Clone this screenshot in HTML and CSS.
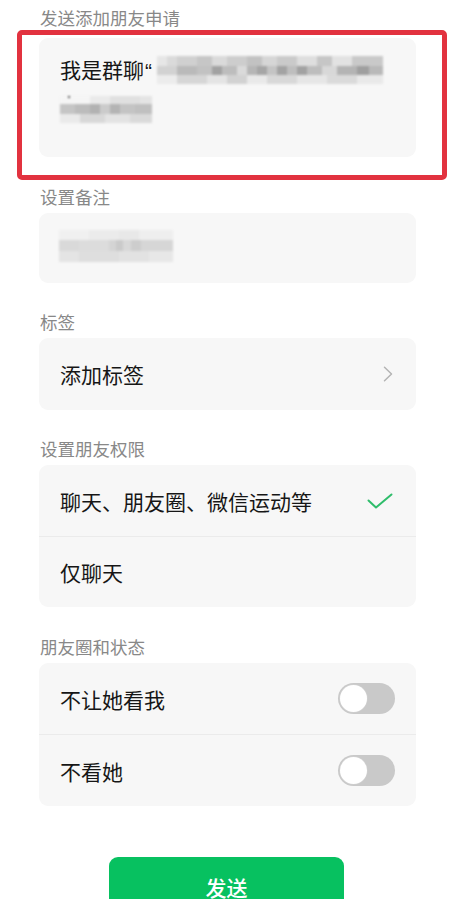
FILE: index.html
```html
<!DOCTYPE html>
<html lang="zh-CN">
<head>
<meta charset="utf-8">
<title>申请添加朋友</title>
<link rel="stylesheet" href="styles.css">
</head>
<body>
<main class="page">
  <section class="section first">
    <div class="label">发送添加朋友申请</div>
    <div class="card message">
      <div class="msg-line"><span class="msg-text">我是群聊<span class="quote">“</span></span><span class="mosaic mosaic-a"></span></div>
      <div class="msg-line"><span class="mosaic mosaic-b"><span class="dot"></span></span></div>
      <div class="highlight"></div>
    </div>
  </section>

  <section class="section">
    <div class="label">设置备注</div>
    <div class="card remark">
      <span class="mosaic mosaic-c"></span>
    </div>
  </section>

  <section class="section mid">
    <div class="label">标签</div>
    <div class="card">
      <div class="row tall">
        <span class="row-text">添加标签</span>
        <svg class="chevron" width="10" height="16" viewBox="0 0 10 16"><path d="M1.5 1.2 L8.5 8 L1.5 14.8" fill="none" stroke="#b4b4b4" stroke-width="1.5" stroke-linecap="round" stroke-linejoin="round"/></svg>
      </div>
    </div>
  </section>

  <section class="section mid">
    <div class="label">设置朋友权限</div>
    <div class="card">
      <div class="row divided">
        <span class="row-text">聊天、朋友圈、微信运动等</span>
        <svg class="check" width="26" height="16" viewBox="0 0 26 16"><path d="M1.5 7.5 L9 14.5 L24.5 1.5" fill="none" stroke="#2fbd6b" stroke-width="2" stroke-linecap="round" stroke-linejoin="round"/></svg>
      </div>
      <div class="row short">
        <span class="row-text">仅聊天</span>
      </div>
    </div>
  </section>

  <section class="section">
    <div class="label">朋友圈和状态</div>
    <div class="card">
      <div class="row divided">
        <span class="row-text">不让她看我</span>
        <span class="toggle"><span class="knob"></span></span>
      </div>
      <div class="row">
        <span class="row-text">不看她</span>
        <span class="toggle"><span class="knob"></span></span>
      </div>
    </div>
  </section>

  <div class="actions">
    <button class="send">发送</button>
  </div>
</main>
</body>
</html>
```

FILE: styles.css
```css
html, body {
  margin: 0;
  padding: 0;
  background: #ffffff;
}

body {
  font-family: "Noto Sans CJK SC", "Noto Sans", sans-serif;
  color: #161616;
  overflow: hidden;
}

.page {
  padding: 6px 37px 0 39px;
}

.section {
  margin-top: 28px;
}

.section.first {
  margin-top: 0;
}

.section.mid {
  margin-top: 27px;
}

.label {
  font-size: 17.5px;
  line-height: 24px;
  color: #888888;
  padding-left: 1px;
}

.card {
  margin-top: 4px;
  background: #f7f7f7;
  border-radius: 9px;
}

.section.first .card {
  margin-top: 8px;
}

.message {
  position: relative;
  padding: 14px 21px 33px;
  height: 72px;
}

.msg-line {
  display: flex;
  align-items: center;
  height: 36px;
}

.msg-text {
  font-size: 21px;
  line-height: 36px;
  white-space: nowrap;
}

.quote {
  font-family: "Liberation Sans", sans-serif;
  margin-left: 1px;
}

.highlight {
  position: absolute;
  left: -22px;
  top: -8px;
  right: -31px;
  bottom: -23px;
  border: 5px solid #e2323f;
  border-radius: 5px;
  pointer-events: none;
}

.mosaic {
  display: block;
  filter: blur(1px);
}

.mosaic-a {
  width: 226px;
  height: 28px;
  margin-left: 5px;
  background:
    linear-gradient(to right, #e6e6e6 0 10px, #dadada 10px 20px, #d0d0d0 20px 40px, #c6c6c6 40px 55px, #dadada 55px 70px, #cdcdcd 70px 90px, #c2c2c2 90px 105px, #d6d6d6 105px 120px, #cacaca 120px 140px, #dedede 140px 160px, #c6c6c6 160px 175px, #e2e2e2 175px 195px, #c9c9c9 195px 226px) 0 0 / 100% 10px no-repeat,
    linear-gradient(to right, #d2d2d2 0 20px, #bababa 20px 40px, #c2c2c2 40px 55px, #a2a2a2 55px 65px, #bdbdbd 65px 80px, #dadada 80px 90px, #b6b6b6 90px 100px, #a6a6a6 100px 110px, #c4c4c4 110px 120px, #a3a3a3 120px 130px, #bebebe 130px 140px, #a2a2a2 140px 150px, #bdbdbd 150px 165px, #d8d8d8 165px 180px, #b4b4b4 180px 200px, #9f9f9f 200px 212px, #b9b9b9 212px 226px) 0 10px / 100% 9px no-repeat,
    linear-gradient(to right, #ececec 0 20px, #d6d6d6 20px 50px, #e4e4e4 50px 70px, #d2d2d2 70px 90px, #e9e9e9 90px 110px, #d8d8d8 110px 140px, #e6e6e6 140px 170px, #dadada 170px 200px, #e9e9e9 200px 226px) 0 19px / 100% 9px no-repeat;
}

.mosaic-b {
  position: relative;
  width: 92px;
  height: 27px;
  margin-top: 6px;
  background:
    linear-gradient(to right, #f5f5f5 0 30px, #eaeaea 30px 50px, #e0e0e0 50px 80px, #e4e4e4 80px 92px) 0 0 / 100% 8px no-repeat,
    linear-gradient(to right, #c5c5c5 0 15px, #bcbcbc 15px 30px, #b2b2b2 30px 40px, #cbcbcb 40px 50px, #b4b4b4 50px 60px, #c4c4c4 60px 75px, #c0c0c0 75px 92px) 0 8px / 100% 10px no-repeat,
    linear-gradient(to right, #eaeaea 0 20px, #d8d8d8 20px 45px, #e3e3e3 45px 70px, #dadada 70px 92px) 0 18px / 100% 9px no-repeat;
}

.dot {
  position: absolute;
  left: 8px;
  top: 0;
  width: 2px;
  height: 2px;
  background: #555555;
}

.remark {
  height: 70px;
  display: flex;
  align-items: center;
  padding-left: 20px;
}

.mosaic-c {
  width: 114px;
  height: 32px;
  margin-top: -4px;
  background:
    linear-gradient(to right, #f0f0f0 0 30px, #ebebeb 30px 60px, #e8e8e8 60px 80px, #eeeeee 80px 114px) 0 0 / 100% 10px no-repeat,
    linear-gradient(to right, #d9d9d9 0 20px, #dcdcdc 20px 50px, #d4d4d4 50px 57px, #cacaca 57px 64px, #d8d8d8 64px 72px, #cdcdcd 72px 82px, #d6d6d6 82px 114px) 0 10px / 100% 11px no-repeat,
    linear-gradient(to right, #e4e4e4 0 20px, #dedede 20px 60px, #e2e2e2 60px 90px, #e7e7e7 90px 114px) 0 21px / 100% 11px no-repeat;
}

.row {
  height: 71px;
  display: flex;
  align-items: center;
  justify-content: space-between;
  padding: 0 21px;
}

.row.tall {
  height: 72px;
  padding-right: 23px;
}

.row.short {
  height: 70px;
}

.row.divided {
  border-bottom: 1px solid #ebebeb;
}

.row-text {
  font-size: 21px;
  line-height: 30px;
}

.check {
  display: block;
  margin-right: 2px;
}

.chevron {
  display: block;
}

.toggle {
  position: relative;
  display: block;
  width: 57px;
  height: 31px;
  border-radius: 16px;
  background: #c9c9c9;
}

.knob {
  position: absolute;
  left: 2px;
  top: 2px;
  width: 27px;
  height: 27px;
  border-radius: 50%;
  background: #ffffff;
  box-shadow: 0 0 0 0.5px #d4d4d4;
}

.actions {
  display: flex;
  justify-content: center;
  margin-top: 51px;
}

.send {
  width: 235px;
  height: 60px;
  margin-left: -2px;
  border: none;
  border-radius: 9px;
  background: #07c160;
  color: #ffffff;
  font-family: "Noto Sans CJK SC", "Noto Sans", sans-serif;
  font-size: 21px;
  font-weight: 500;
  line-height: 22px;
  padding: 0;
}
```
